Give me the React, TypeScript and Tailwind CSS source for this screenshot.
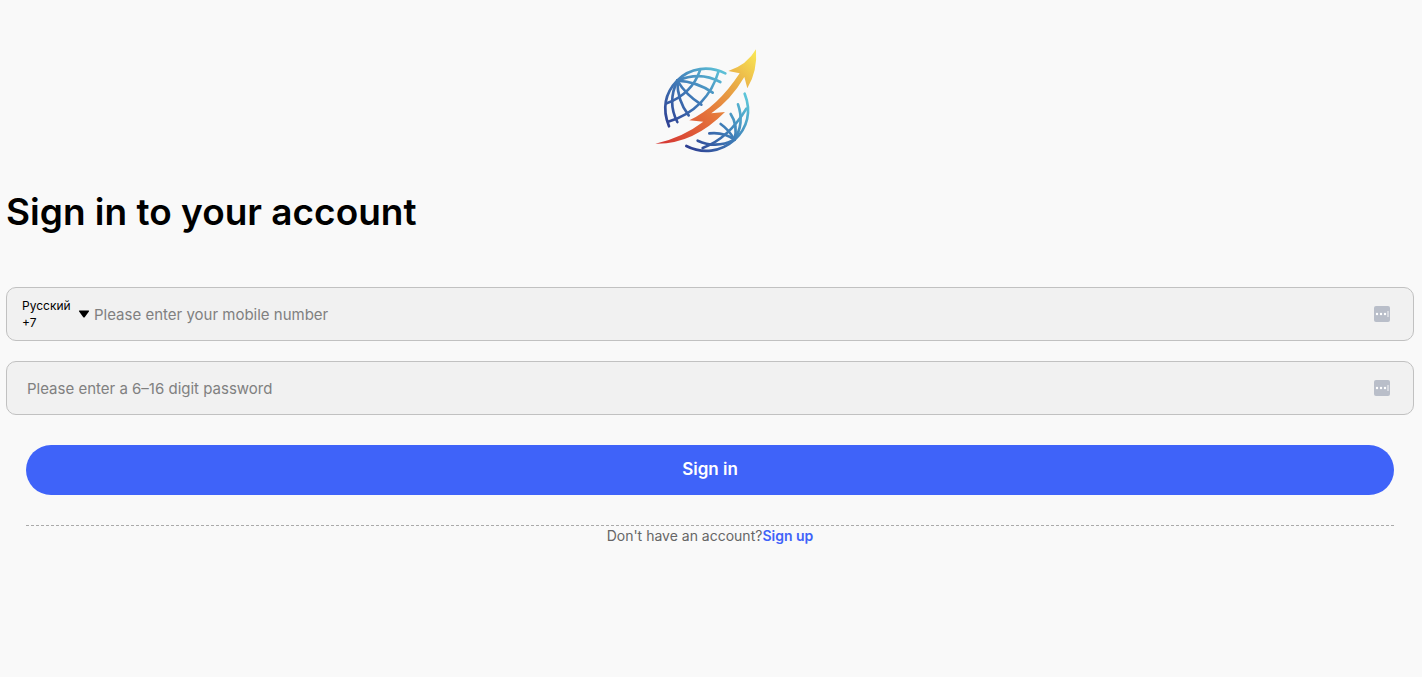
import React, { useState } from 'react';

const countries = [
  { name: 'Русский', code: '+7' },
  { name: 'English', code: '+44' },
  { name: 'Deutsch', code: '+49' },
];

const Logo = () => (
  <svg viewBox="0 0 390 360" className="w-[130px] h-[120px]" role="img" aria-label="Logo">
    <defs>
      <linearGradient id="globeTop" gradientUnits="userSpaceOnUse" x1="80" y1="260" x2="240" y2="90">
        <stop offset="0" stopColor="#2e3f92" />
        <stop offset="0.5" stopColor="#3f78b6" />
        <stop offset="1" stopColor="#5cbfd6" />
      </linearGradient>
      <linearGradient id="globeBottom" gradientUnits="userSpaceOnUse" x1="145" y1="325" x2="325" y2="180">
        <stop offset="0" stopColor="#2e3f92" />
        <stop offset="0.55" stopColor="#3f7fb8" />
        <stop offset="1" stopColor="#5cc4d8" />
      </linearGradient>
      <linearGradient id="arrow" gradientUnits="userSpaceOnUse" x1="80" y1="312" x2="345" y2="40">
        <stop offset="0" stopColor="#d63a34" />
        <stop offset="0.38" stopColor="#e4703a" />
        <stop offset="0.7" stopColor="#e8a945" />
        <stop offset="1" stopColor="#f8e455" />
      </linearGradient>
    </defs>
    <g fill="none" stroke="url(#globeTop)" strokeWidth="8" strokeLinecap="round">
      <path d="M87 259C66 206 76 158 112 121C150 83 207 76 256 100" />
      <path d="M112 122C91 166 92 208 112 246" />
      <path d="M112 122C112 162 124 198 146 226" />
      <path d="M112 122C130 152 154 175 184 194" />
      <path d="M112 122C151 124 188 137 218 158" />
      <path d="M112 122C157 103 201 104 241 126" />
      <path d="M180 91C163 140 130 171 80 190" />
      <path d="M236 93C215 166 164 222 84 245" />
    </g>
    <g fill="none" stroke="url(#globeBottom)" strokeWidth="8" strokeLinecap="round">
      <path d="M314 161C335 214 323 264 283 300C242 336 188 343 139 318" />
      <path d="M283 299C303 268 307 230 294 193" />
      <path d="M283 299C291 270 287 244 272 222" />
      <path d="M283 299C273 280 259 264 242 252" />
      <path d="M283 299C262 283 236 277 208 280" />
      <path d="M283 299C247 318 208 318 173 302" />
      <path d="M319 206C288 258 242 304 188 324" />
    </g>
    <path
      fill="url(#arrow)"
      d="M46 311Q127 293 190 245L148 241Q232 202 299 100L265 93Q321 75 348 28Q353 94 322 145L313 111Q272 181 214 220L255 216Q158 314 46 311Z"
    />
  </svg>
);

const FillIcon = () => (
  <svg viewBox="0 0 16 16" className="w-4 h-4 shrink-0" aria-hidden="true">
    <rect width="16" height="16" rx="2" fill="#b9bec9" />
    <circle cx="3" cy="8" r="1.2" fill="#fff" />
    <circle cx="7" cy="8" r="1.2" fill="#fff" />
    <circle cx="11" cy="8" r="1.2" fill="#fff" />
    <path d="M14 5v6" stroke="#e4e6ea" strokeWidth="1.4" />
  </svg>
);

const App = () => {
  const [country, setCountry] = useState(countries[0]);
  const [phone, setPhone] = useState('');
  const [password, setPassword] = useState('');

  const handleCountry = (code: string) => {
    setCountry(countries.find((c) => c.code === code) || countries[0]);
  };

  return (
    <div className="min-h-screen bg-[#f9f9f9] pt-10 pl-[6px] pr-2 font-['Inter','Liberation_Sans',sans-serif] text-black">
      <div className="flex justify-center pr-[10px]">
        <Logo />
      </div>
      <h1 className="mt-7 text-[37px] leading-12 font-semibold">Sign in to your account</h1>

      <form className="mt-[51px]" onSubmit={(e) => e.preventDefault()}>
        <div className="flex items-center h-[54px] pl-[15px] pr-[23px] rounded-[10px] border border-[#c1c1c1] bg-[#f1f1f1]">
          <div className="relative flex items-center shrink-0">
            <div className="w-14 text-xs leading-[17px]">
              <div>{country.name}</div>
              <div>{country.code}</div>
            </div>
            <svg viewBox="0 0 12 8" className="w-3 h-2" aria-hidden="true">
              <path d="M1.5 0.5h9q1 .2.4 1L6.7 7.2q-.7.8-1.4 0L1.1 1.5q-.6-.8.4-1z" />
            </svg>
            <select
              aria-label="Country code"
              value={country.code}
              onChange={(e) => handleCountry(e.target.value)}
              className="absolute inset-0 w-full opacity-0 cursor-pointer"
            >
              {countries.map((c) => (
                <option key={c.code} value={c.code}>{c.name}</option>
              ))}
            </select>
          </div>
          <input
            type="tel"
            aria-label="Mobile number"
            value={phone}
            onChange={(e) => setPhone(e.target.value)}
            placeholder="Please enter your mobile number"
            className="flex-1 min-w-0 h-full ml-1 text-[15px] bg-transparent outline-none placeholder:text-[#808080]"
          />
          <FillIcon />
        </div>

        <div className="flex items-center h-[54px] mt-5 pl-5 pr-[23px] rounded-[10px] border border-[#c1c1c1] bg-[#f1f1f1]">
          <input
            type="password"
            aria-label="Password"
            value={password}
            onChange={(e) => setPassword(e.target.value)}
            placeholder="Please enter a 6–16 digit password"
            className="flex-1 min-w-0 h-full text-[15px] bg-transparent outline-none placeholder:text-[#808080]"
          />
          <FillIcon />
        </div>

        <div className="mt-[30px] px-5">
          <button type="submit" className="w-full h-[50px] rounded-full bg-[#3f63f9] text-[17px] font-semibold text-white cursor-pointer">
            Sign in
          </button>
          <div className="mt-[30px] border-t border-dashed border-[#aaaaaa] text-center text-sm leading-5 text-[#666666]">
            Don't have an account?
            <a href="#signup" className="font-semibold text-[#3f63f9]">Sign up</a>
          </div>
        </div>
      </form>
    </div>
  );
};

export default App;
